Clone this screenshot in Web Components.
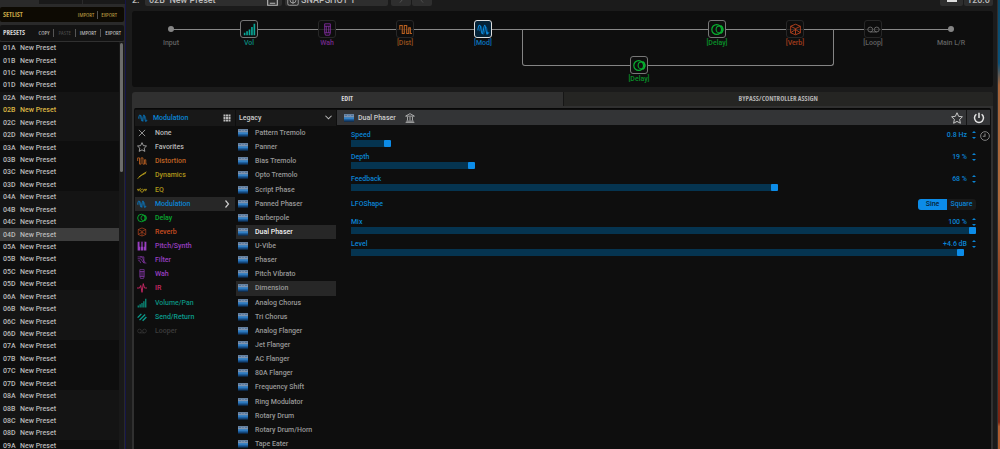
<!DOCTYPE html>
<html lang="en">
<head>
<meta charset="utf-8">
<title>Preset editor</title>
<style>
  html, body { margin: 0; height: 100%; background: #1b1b1b; overflow: hidden; }
  body { font: 500 7px/10px Roboto, "Liberation Sans", sans-serif; color: #bababa; }
</style>
</head>
<body>
<preset-editor></preset-editor>
<script>
const RESET = `
  * { box-sizing: border-box; }
  button { font: inherit; color: inherit; background: none; border: 0; padding: 0; margin: 0; text-align: left; white-space: pre; }
  ul { list-style: none; margin: 0; padding: 0; }
`;
class Base extends HTMLElement {
  connectedCallback() {
    if (this.shadowRoot) return;
    const t = document.createElement('template');
    t.innerHTML = `<style>${RESET}${this.styles()}</style>${this.markup()}`;
    this.attachShadow({ mode: 'open' }).append(t.content.cloneNode(true));
  }
}

const ICONS = {
  mod: '<path d="M1 9C2 1 4 1 5 8s2 7 3 0 2-7 3 0 1.500 7 2.500 3" stroke-width="1.300"/><path d="M3 10C4 2 5.500 2 6.500 9s2 6 3 0 2-6 3 0 1 5 2.500 2" opacity=".6"/>',
  none: '<path d="M3 3l10 10M13 3L3 13" stroke-width="1.200"/>',
  star: '<path d="M8 1l2.200 4.800 5 .6-3.700 3.500 1 5.100L8 12.500 3.500 15l1-5.100L.8 6.400l5-.6z" stroke-linejoin="round" stroke-width="1.300"/>',
  dist: '<path d="M1 8V3h3v10h2.500V3h3v10H12V6h2v7h2" stroke-width="1.300"/>',
  dyn: '<path d="M1 14L7 8l8-5M3 11l5-3M8 8l6-3" stroke-width="1.600"/>',
  eq: '<path d="M0 7h4c2 0 2 5 4 5s2-5 4-5h4M1 9h3M12 9h3M4 7c2-4 2 2 4 0s2 4 4 0" stroke-width="1.400"/>',
  delay: '<circle cx="7" cy="8" r="6" stroke-width="1.500"/><circle cx="10.500" cy="8" r="4.200" stroke-width="1.300"/><path d="M12 3a6 6 0 010 10" stroke-width="1.500"/>',
  verb: '<path d="M8 1.500l6 2.500v8l-6 2.500L2 12V4zM2 4l6 3 6-3M8 7v7M2 12l6-4 6 4"/>',
  pitch: '<path d="M1 1h4v14H1zM6 1h4v14H6zM11 1h4v14h-4z" fill="currentColor" stroke="none"/><path d="M4 1h3v8H4zM9 1h3v8H9z" fill="#111" stroke="none"/>',
  filter: '<path d="M1 3h6c3 0 3 10 8 10M1 6h4c3 0 3 7 8 7M5 3h6v10M2 9h2l2 4"/>',
  wah: '<path d="M4.500 1h7v11l-1 3h-5l-1-3zM4.500 4h7M4.500 12h7M6.500 4v8M9.500 4v8"/>',
  ir: '<path d="M0 8h4l2-4 2 11 2-14 2 7h4" stroke-width="1.500"/>',
  vol: '<path d="M2 15v-3M5 15v-5M8 15V8M11 15V5M14 15V1" stroke-width="2"/>',
  send: '<path d="M1 9l6-6M4 13L13 4M9 14l6-6" stroke-width="2.200"/>',
  loop: '<circle cx="4" cy="8" r="3"/><circle cx="12" cy="8" r="3"/><path d="M4 11h8"/>',
  grid: '<path d="M1 1h4v4H1zM6 1h4v4H6zM11 1h4v4h-4zM1 6h4v4H1zM6 6h4v4H6zM11 6h4v4h-4zM1 11h4v4H1zM6 11h4v4H6zM11 11h4v4h-4z" fill="currentColor" stroke="none"/>',
  down: '<path d="M1 4l7 7 7-7" stroke-width="2.400"/>',
  right: '<path d="M5 1l6 7-6 7" stroke-width="2.400"/>',
  left: '<path d="M11 1L5 8l6 7" stroke-width="2"/>',
  power: '<path d="M8 1v7M4.500 3a6 6 0 107 0" stroke-width="2"/>',
  clock: '<circle cx="8" cy="8" r="7" stroke-width="1.500"/><path d="M8 4v4.500H4.500" stroke-width="1.700"/>',
  bank: '<path d="M1 5l7-4 7 4zM2 13h12M1 15h14M4 6v6M8 6v6M12 6v6" stroke-width="1.200"/>',
  save: '<path d="M1 1h14v14H1zM4 12h8" stroke-width="1.600"/>',
  snap: '<rect x="1" y="1" width="14" height="14" rx="2"/><circle cx="8" cy="8" r="4"/><path d="M8 5v8"/>',
  device: '<path d="M0 2h16v11H0z" fill="#1d5f9f" stroke="none"/><path d="M0 2h16v5H0z" fill="#7f93ad" stroke="none"/><path d="M0 7h16v2H0z" fill="#3b8bd0" stroke="none"/><path d="M1 4h4M7 4h2M11 4h4" stroke="#35618f"/><path d="M0 12h16v2H0z" fill="#0c2c50" stroke="none"/>'
};
customElements.define('tone-icon', class extends Base {
  styles() { return `:host { display: block; flex: none; width: 10px; height: 10px; } svg { display: block; width: 100%; height: 100%; }`; }
  markup() { return `<svg viewBox="0 0 16 16" fill="none" stroke="currentColor" aria-hidden="true">${ICONS[this.getAttribute('name')]}</svg>`; }
});

customElements.define('preset-sidebar', class extends Base {
  styles() { return `
    :host { display: flex; flex-direction: column; min-height: 0; background: #2a2a2a; border-right: 1px solid #15154a; }
    .tabs { height: 7px; display: grid; grid-template-columns: 38px 1fr 1fr; gap: 1px; padding-bottom: 3px; }
    .tabs i { background: #191919; } .tabs i:first-child { background: none; }
    .bar { display: flex; align-items: center; padding: 0 7px 0 3px; margin-right: 1px; border-radius: 2px; font-family: "Liberation Sans Narrow", "Open Sans", sans-serif; font-stretch: condensed; font-size: 6px; line-height: 8px; font-weight: normal; color: #d0d0d0; }
    .bar h2 { font-size: 7px; line-height: 8px; font-weight: bold; margin: 0 auto 0 0; }
    .bar button + button { border-left: 1px solid #555; margin-left: 3px; padding-left: 3px; }
    .bar.set { height: 15px; background: #0d0a03; color: #c4a446; margin-bottom: 3px; }
    .bar.pre { height: 17px; background: #131313; border-bottom: 1px solid #303030; padding-right: 3px; }
    .pre button + button { margin-left: 4px; padding-left: 4px; }
    .pre .off { color: #4c4c4c; }
    .list { flex: 1; min-height: 0; display: grid; grid-template-columns: 1fr 5px; background: #191919; margin-right: 1px; }
    ul { display: grid; grid-template-rows: repeat(33, minmax(12px, 1fr)); margin-bottom: -3px; }
    li { display: grid; background: #0e0e0e; } li.alt { background: #141414; }
    li.cur { color: #dcb744; } li.hov { background: #3d3d3d; }
    li button { display: grid; grid-template-columns: 17px 1fr; align-items: center; padding-left: 3px; }
    .thumb { width: 3px; height: 129px; margin: 1px; background: #6c6c6c; border-radius: 2px; }
  `; }
  markup() {
    const rows = [];
    for (let i = 0; i < 33; i++) {
      const bank = (i >> 2) + 1, id = '0' + bank + 'ABCD'[i % 4];
      rows.push(`<li class="${bank % 2 ? '' : 'alt'} ${id === '02B' ? 'cur' : ''} ${id === '04D' ? 'hov' : ''}"><button><span>${id}</span><span>New Preset</span></button></li>`);
    }
    return `<div class="tabs"><i></i><i></i><i></i></div>
      <div class="bar set"><h2>SETLIST</h2><button>IMPORT</button><button>EXPORT</button></div>
      <div class="bar pre"><h2>PRESETS</h2><button>COPY</button><button class="off">PASTE</button><button>IMPORT</button><button>EXPORT</button></div>
      <div class="list"><ul>${rows.join('')}</ul><div class="thumb"></div></div>`;
  }
});

customElements.define('top-bar', class extends Base {
  styles() { return `
    :host { display: flex; align-items: flex-end; height: 6px; margin-bottom: 5px; overflow: hidden; font-size: 9px; line-height: 12px; font-weight: 500; color: #bbb; }
    button, span { display: flex; align-items: center; justify-content: space-between; height: 12px; background: #2e2e2e; border-radius: 2px; padding: 0 4px; margin-right: 3px; }
    span { background: none; width: 13px; padding: 0; margin: 0; }
    .name { width: 137px; } .snap { width: 103px; justify-content: flex-start; padding: 0 2px; gap: 2px; }
    .nav { width: 20px; margin-right: 1px; justify-content: center; color: #555; }
    .io { margin: 0 1px 0 auto; width: 23px; justify-content: center; } .bpm { margin: 0; width: 29px; justify-content: center; }
    .io i { width: 10px; height: 4px; background: #ddd; }
    tone-icon { width: 12px; height: 12px; } .nav tone-icon { width: 6px; height: 6px; }
    .name tone-icon { width: 11px; height: 11px; }
  `; }
  markup() { return `<span>2:</span><button class="name">02B  New Preset<tone-icon name="save"></tone-icon></button>
    <button class="snap"><tone-icon name="snap"></tone-icon>SNAPSHOT 1</button>
    <button class="nav" aria-label="Previous"><tone-icon name="right"></tone-icon></button><button class="nav" aria-label="Next"><tone-icon name="left"></tone-icon></button>
    <button class="io" aria-label="Tap"><i></i></button><button class="bpm">120.0</button>`; }
});

customElements.define('signal-node', class extends Base {
  styles() { return `
    :host { display: flex; flex-direction: column; align-items: center; gap: 1px; }
    button { display: grid; place-items: center; width: 18px; height: 18px; border: 1px solid #272727; border-radius: 3px; background: #0e0e0ecc; }
    tone-icon { width: 13px; height: 13px; }
    :host([on]) button { border-color: #777; background: #0e0e0e; }
    :host([selected]) button { border: 1px solid #ddd; background: #052338; }
    .dot { width: 18px; height: 18px; display: grid; place-items: center; }
    .dot i { width: 6px; height: 6px; border-radius: 50%; background: #858585; }
    span { line-height: 8px; opacity: .8; }
  `; }
  markup() {
    const icon = this.getAttribute('icon');
    return (icon ? `<button><tone-icon name="${icon}"></tone-icon></button>` : '<div class="dot"><i></i></div>') + '<span><slot></slot></span>';
  }
});

customElements.define('signal-chain', class extends Base {
  styles() { return `
    :host { display: grid; grid-template-columns: repeat(11, 1fr); grid-template-rows: 36px 1fr; height: 76px; padding: 9px 3px 0 0; background: #0e0e0e; border-radius: 3px; margin-bottom: 5px; }
    .wire { grid-area: 1 / 1 / 2 / 12; height: 1px; margin: 9px 4.545% 0; background: #888; }
    .branch { grid-area: 1 / 6 / 3 / 10; height: 37px; margin-top: 9px; border: solid #848484; border-width: 0 1px 1px; border-radius: 0 0 3px 3px; }
    signal-node { grid-row: 1; }
  `; }
  markup() { return `<div class="wire"></div><div class="branch"></div>
    <signal-node style="grid-column:1;color:#777">Input</signal-node>
    <signal-node on icon="vol" style="grid-column:2;color:#08a898">Vol</signal-node>
    <signal-node icon="wah" style="grid-column:3;color:#8a30aa">Wah</signal-node>
    <signal-node icon="dist" style="grid-column:4;color:#b86020">[Dist]</signal-node>
    <signal-node on selected icon="mod" style="grid-column:5;color:#0a8be0">[Mod]</signal-node>
    <signal-node on icon="delay" style="grid-column:7;grid-row:2;color:#08b030">[Delay]</signal-node>
    <signal-node on icon="delay" style="grid-column:8;color:#08b030">[Delay]</signal-node>
    <signal-node icon="verb" style="grid-column:9;color:#c84820">[Verb]</signal-node>
    <signal-node icon="loop" style="grid-column:10;color:#777">[Loop]</signal-node>
    <signal-node style="grid-column:11;color:#777">Main L/R</signal-node>`; }
});

const CATS = [['none','None','#b8b8b8'],['star','Favorites','#b8b8b8'],['dist','Distortion','#c06424'],['dyn','Dynamics','#ae961a'],['eq','EQ','#ae961a'],['mod','Modulation','#0a84d4'],['delay','Delay','#08a82e'],['verb','Reverb','#c64c20'],['pitch','Pitch/Synth','#983ec0'],['filter','Filter','#983ec0'],['wah','Wah','#983ec0'],['ir','IR','#c82864'],['vol','Volume/Pan','#0a9280'],['send','Send/Return','#0a9c8c'],['loop','Looper','#3c3c3c']];
const MODELS = ['Pattern Tremolo','Panner','Bias Tremolo','Opto Tremolo','Script Phase','Panned Phaser','Barberpole','Dual Phaser','U-Vibe','Phaser','Pitch Vibrato','Dimension','Analog Chorus','Tri Chorus','Analog Flanger','Jet Flanger','AC Flanger','80A Flanger','Frequency Shift','Ring Modulator','Rotary Drum','Rotary Drum/Horn','Tape Eater'];

customElements.define('browse-list', class extends Base {
  styles() { return `
    :host { display: flex; flex-direction: column; min-height: 0; }
    header { flex: none; display: flex; align-items: center; height: 16px; padding: 0 4px 1px 3px; background: #181818; }
    header slot { display: contents; }
    ul { flex: 1; display: grid; grid-template-rows: repeat(23, minmax(14px, 1fr)); margin-bottom: -2px; }
    li { display: grid; }
    li button { display: flex; align-items: center; gap: 8px; padding: 0 4px 0 2px; }
    li span { flex: 1; }
    li.sel, li.hov { background: #272727; }
    .models li button { gap: 7px; color: #989898; }
    .models li.sel button { color: #f0f0f0; }
    .arrow { width: 8px; height: 8px; color: #ccc; }
  `; }
  markup() {
    const models = this.getAttribute('kind') === 'models';
    const items = models
      ? MODELS.map(m => `<li class="${m === 'Dual Phaser' ? 'sel' : ''} ${m === 'Dimension' ? 'hov' : ''}"><button><tone-icon name="device"></tone-icon><span>${m}</span></button></li>`)
      : CATS.map(([i, n, c]) => `<li style="color:${c}" class="${n === 'Modulation' ? 'sel' : ''}"><button><tone-icon name="${i}"></tone-icon><span>${n}</span>${n === 'Modulation' ? '<tone-icon class="arrow" name="right"></tone-icon>' : ''}</button></li>`);
    return `<header><slot></slot></header><ul class="${models ? 'models' : 'cats'}">${items.join('')}</ul>`;
  }
});

customElements.define('value-step', class extends Base {
  styles() { return `:host { display: flex; align-items: center; gap: 5px; height: 10px; } button, svg { display: block; width: 4px; height: 8px; }`; }
  markup() { return `<slot></slot><button aria-label="Step value"><svg viewBox="0 0 4 8" fill="currentColor"><path d="M0 2L2 0l2 2zM0 6l2 2 2-2z"/></svg></button>`; }
});

customElements.define('param-slider', class extends Base {
  styles() { return `
    :host { display: grid; grid-template-columns: 1fr auto; color: #0a84d4; }
    input { grid-column: 1 / 3; appearance: none; display: block; width: 100%; height: 7px; margin: 0; outline: 0;
      background: linear-gradient(#053450, #053450) 0 0 / calc(var(--v) * (100% - 7px) + 3px) 100% no-repeat; }
    input::-webkit-slider-thumb { appearance: none; width: 7px; height: 7px; border-radius: 1px; background: #0c8ce8; }
  `; }
  markup() {
    const v = this.getAttribute('value');
    return `<label for="r">${this.getAttribute('label')}</label><value-step>${this.getAttribute('text')}</value-step>
      <input id="r" type="range" min="0" max="1000" value="${v}" style="--v:${v / 1000}">`;
  }
});

customElements.define('param-panel', class extends Base {
  styles() { return `
    :host { display: flex; flex-direction: column; min-width: 0; }
    header { display: flex; align-items: center; height: 15px; padding-left: 7px; background: #333436; color: #ccc; }
    header .t { margin: 0 9px 0 4px; }
    header .fav { margin-left: auto; width: 19px; display: grid; place-items: center; }
    header .pow { width: 24px; height: 15px; border-left: 1px solid #151515; display: grid; place-items: center; color: #e4e4e4; }
    .fav tone-icon, .pow tone-icon { width: 12px; height: 12px; }
    .rows { display: grid; grid-template-columns: minmax(0, 1fr) 14px; gap: 5px 0; padding: 5px 0 0 14px; }
    .rows > * { grid-column: 1; }
    .rows > .clk { grid-area: 1 / 2; place-self: start end; margin-top: 1px; color: #858585; }
    .shape { display: flex; align-items: flex-start; justify-content: space-between; height: 16px; line-height: 11px; color: #0a84d4; padding-top: 3px; }
    .seg { display: flex; height: 11px; border-radius: 3px; overflow: hidden; background: #191919; }
    .seg button { width: 29px; text-align: center; line-height: 11px; }
    .seg .on { background: #0c8ce8; color: #06243a; }
  `; }
  markup() { return `<header><tone-icon name="device"></tone-icon><span class="t">Dual Phaser</span><tone-icon name="bank"></tone-icon>
      <button class="fav" aria-label="Favorite"><tone-icon name="star"></tone-icon></button><button class="pow" aria-label="Bypass"><tone-icon name="power"></tone-icon></button></header>
    <div class="rows">
      <param-slider label="Speed" text="0.8 Hz" value="54"></param-slider>
      <button class="clk" aria-label="Tempo sync"><tone-icon name="clock"></tone-icon></button>
      <param-slider label="Depth" text="19 %" value="190"></param-slider>
      <param-slider label="Feedback" text="68 %" value="680"></param-slider>
      <div class="shape"><span>LFOShape</span><div class="seg"><button class="on" aria-pressed="true">Sine</button><button aria-pressed="false">Square</button></div></div>
      <param-slider label="Mix" text="100 %" value="1000"></param-slider>
      <param-slider label="Level" text="+4.6 dB" value="980"></param-slider>
    </div>`; }
});

customElements.define('edit-panel', class extends Base {
  styles() { return `
    :host { flex: 1; min-height: 0; display: flex; flex-direction: column; background: #303030; border-radius: 3px 3px 0 0; overflow: hidden; }
    nav { display: grid; grid-template-columns: 1fr 1fr; height: 16px; font: bold 7px/14px "Liberation Sans Narrow", "Open Sans", sans-serif; font-stretch: condensed; color: #b0b0b0; }
    nav button { text-align: center; height: 14px; } nav button + button { background: #252523; border-left: 1px solid #161616; }
    nav .on { color: #d4d4d4; }
    .body { flex: 1; min-height: 0; display: grid; grid-template-columns: 100px 100px minmax(0, 1fr); gap: 1px; margin: 0 2px; padding: 1px 1px 0; background: #0e0e0e; border-top: 1px solid #080808; border-radius: 2px 2px 0 0; }
    .m { color: #0a84d4; margin-left: 5px; margin-right: auto; }
    .l { color: #ccc; margin-right: auto; }
    .g { width: 8px; height: 8px; color: #bbb; } .d { width: 7px; height: 7px; color: #bbb; }
    .c { color: #0a84d4; }
  `; }
  markup() { return `<nav><button class="on">EDIT</button><button>BYPASS/CONTROLLER ASSIGN</button></nav>
    <div class="body">
      <browse-list kind="cats"><tone-icon class="c" name="mod"></tone-icon><span class="m">Modulation</span><tone-icon class="g" name="grid"></tone-icon></browse-list>
      <browse-list kind="models"><span class="l">Legacy</span><tone-icon class="d" name="down"></tone-icon></browse-list>
      <param-panel></param-panel>
    </div>`; }
});

customElements.define('preset-editor', class extends Base {
  styles() { return `
    :host { display: grid; grid-template-columns: 126px minmax(0, 1fr) 2px; grid-template-rows: minmax(0, 1fr); height: 100vh; }
    main { display: flex; flex-direction: column; min-height: 0; padding: 0 4px 0 6px; border-right: 1px solid #303030; background: #1b1b1b; }
    .desk { background: linear-gradient(#0a4a6a, #0a5078 14%, #a8643a 19%, #b06a3c 45%, #8c3c20 65%, #7c2412 94%, #b05c30 95%); }
  `; }
  markup() { return `<preset-sidebar></preset-sidebar><main><top-bar></top-bar><signal-chain></signal-chain><edit-panel></edit-panel></main><div class="desk"></div>`; }
});
</script>
</body>
</html>
